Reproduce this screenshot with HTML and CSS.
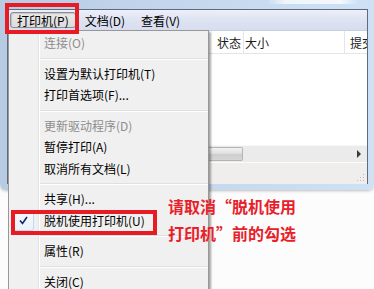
FILE: index.html
```html
<!DOCTYPE html>
<html lang="zh-CN">
<head>
<meta charset="utf-8">
<title>打印机</title>
<link rel="stylesheet" href="styles.css">
</head>
<body>
<div class="screen">
  <div class="window">
    <div class="titlestrip"><span class="glow"></span></div>
    <div class="client">
      <div class="menubar">
        <span class="mb-item pressed">打印机(P)</span>
        <span class="mb-item">文档(D)</span>
        <span class="mb-item">查看(V)</span>
      </div>
      <div class="listhead">
        <div class="col c0"></div>
        <div class="col c1">状态</div>
        <div class="col c2">大小</div>
        <div class="col c3">提交</div>
      </div>
      <div class="listbody"></div>
      <div class="hscroll">
        <div class="thumb"></div>
        <div class="track"></div>
        <div class="arrow"></div>
      </div>
      <div class="statusbar">
        <svg class="grip" width="8" height="8" viewBox="0 0 8 8">
          <rect x="6" y="0" width="1" height="1" fill="#b9b9b9"/>
          <rect x="3" y="3" width="1" height="1" fill="#b9b9b9"/>
          <rect x="6" y="3" width="1" height="1" fill="#b9b9b9"/>
          <rect x="0" y="6" width="1" height="1" fill="#b9b9b9"/>
          <rect x="3" y="6" width="1" height="1" fill="#b9b9b9"/>
          <rect x="6" y="6" width="1" height="1" fill="#b9b9b9"/>
        </svg>
      </div>
    </div>
  </div>

  <div class="dropdown">
    <div class="mi disabled">连接(O)</div>
    <div class="sep"></div>
    <div class="mi">设置为默认打印机(T)</div>
    <div class="mi">打印首选项(F)...</div>
    <div class="sep"></div>
    <div class="mi disabled">更新驱动程序(D)</div>
    <div class="mi">暂停打印(A)</div>
    <div class="mi">取消所有文档(L)</div>
    <div class="sep"></div>
    <div class="mi">共享(H)...</div>
    <div class="mi checked">
      <span class="checkbox">
        <svg width="9" height="9" viewBox="0 0 9 9"><path d="M1 4.5 L3.5 7.5 L8 1" fill="none" stroke="#14237a" stroke-width="1.6"/></svg>
      </span>脱机使用打印机(U)</div>
    <div class="sep"></div>
    <div class="mi">属性(R)</div>
    <div class="sep"></div>
    <div class="mi">关闭(C)</div>
  </div>

  <div class="redbox rb1"></div>
  <div class="redbox rb2"></div>
  <div class="note">请取消“脱机使用<br>打印机”前的勾选</div>
</div>
</body>
</html>
```

FILE: styles.css
```css
* { box-sizing: border-box; }
html, body { margin: 0; padding: 0; }
body {
  width: 374px;
  height: 289px;
  overflow: hidden;
  background: #fcfcfc;
  font-family: "Noto Sans CJK SC", "Liberation Sans", sans-serif;
  font-size: 12px;
  color: #000;
}
.screen {
  position: relative;
  width: 374px;
  height: 289px;
  overflow: hidden;
}
.window {
  width: 374px;
  height: 190px;
  padding: 0 6px 6px 7px;
  background: linear-gradient(to right, #b7cbe3 0px, #c6d9ef 60%, #cfe1f5 100%);
  border-radius: 0 0 6px 6px;
  display: flex;
  flex-direction: column;
  box-shadow: 0 1px 3px rgba(0,0,0,0.25);
}
.titlestrip {
  height: 9px;
  position: relative;
  flex: none;
}
.glow {
  position: absolute;
  left: 260px;
  top: 0;
  width: 92px;
  height: 4px;
  background: linear-gradient(to right, rgba(255,255,255,0), #eef5fd 20%, #f4f8fd 80%, rgba(255,255,255,0));
}
.client {
  flex: 1;
  display: flex;
  flex-direction: column;
  border: 1px solid #5f6a7a;
  border-bottom: none;
  background: #fff;
}
.menubar {
  height: 21px;
  flex: none;
  display: flex;
  align-items: center;
  gap: 2px;
  padding-left: 2px;
  background: linear-gradient(#edf0f9, #dfe4f2 45%, #d7ddef);
  border-bottom: 1px solid #c9cfdc;
}
.mb-item {
  height: 16px;
  line-height: 15px;
  padding: 0 6px;
  border: 1px solid transparent;
  border-radius: 3px;
  white-space: nowrap;
}
.pressed {
  border-color: #8a8d93;
  background: linear-gradient(#e9e9e9, #dcdcdc);
  box-shadow: inset 1px 1px 1px rgba(0,0,0,0.15);
}
.listhead {
  height: 23px;
  flex: none;
  display: flex;
  background: #fff;
  border-bottom: 1px solid #e5e5e5;
  color: #1b1b1b;
}
.col {
  line-height: 24px;
  white-space: nowrap;
  overflow: hidden;
}
.c0 { width: 204px; }
.c1 { width: 32px; padding-left: 5px; border-right: 1px solid #e5e5e5; }
.c2 { width: 101px; padding-left: 1px; border-right: 1px solid #e5e5e5; }
.c3 { flex: 1; padding-left: 5px; }
.listbody {
  flex: 1;
  background: #fff;
}
.hscroll {
  height: 17px;
  flex: none;
  display: flex;
  align-items: stretch;
  background: #ebebeb;
  border-top: 1px solid #f7f7f7;
  position: relative;
}
.thumb {
  width: 235px;
  margin: 1px 0 1px 0;
  background: linear-gradient(#f2f2f2, #e0e0e0 45%, #cdcdcd 55%, #d6d6d6);
  border: 1px solid #b4b4b4;
  border-left: none;
  border-radius: 0 2px 2px 0;
}
.track { flex: 1; }
.arrow {
  width: 14px;
  display: flex;
  align-items: center;
  justify-content: center;
}
.arrow::before {
  content: "";
  width: 0;
  height: 0;
  border-top: 4px solid transparent;
  border-bottom: 4px solid transparent;
  border-left: 4px solid #3a3a3a;
  margin-right: 2px;
}
.statusbar {
  height: 22px;
  flex: none;
  background: #f0eded;
  border-top: 1px solid #fbfbfb;
  display: flex;
  justify-content: flex-end;
  align-items: flex-end;
  padding: 0 2px 2px 0;
}
.dropdown {
  position: absolute;
  left: 8px;
  top: 30px;
  width: 201px;
  height: 275px;
  padding-top: 1px;
  background-color: #f0f0f0;
  background-image: linear-gradient(to right, transparent 29px, #e2e3e3 29px, #e2e3e3 30px, #ffffff 30px, #ffffff 31px, transparent 31px);
  border: 1px solid #979797;
  box-shadow: 2px 2px 2px rgba(0,0,0,0.35);
}
.mi {
  position: relative;
  height: 21.5px;
  line-height: 21.5px;
  padding-left: 35px;
  white-space: nowrap;
}
.disabled { color: #8d8d8d; }
.sep {
  height: 9px;
  margin-left: 31px;
  background: linear-gradient(transparent 4px, #e0e0e0 4px, #e0e0e0 5px, #ffffff 5px, #ffffff 6px, transparent 6px);
}
.checkbox {
  position: absolute;
  left: 3px;
  top: 0;
  width: 22px;
  height: 21px;
  border: 1px solid #c6d8ee;
  border-radius: 3px;
  background: linear-gradient(#f7fafe, #e9f1fb);
  display: flex;
  align-items: center;
  justify-content: center;
}
.redbox {
  position: absolute;
  border: 4px solid #e61b24;
}
.rb1 { left: 5px; top: 3px; width: 74px; height: 31px; }
.rb2 { left: 11px; top: 210px; width: 146px; height: 25px; }
.note {
  position: absolute;
  left: 168px;
  top: 193px;
  font-size: 16px;
  line-height: 27px;
  font-weight: bold;
  color: #e8202a;
  white-space: nowrap;
}
```
